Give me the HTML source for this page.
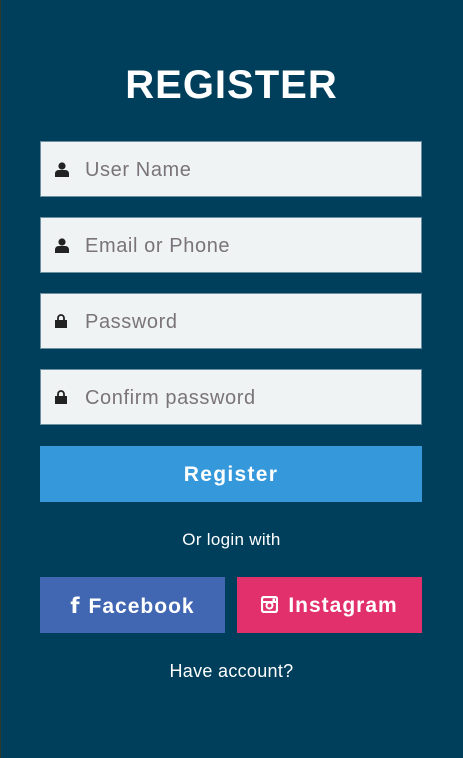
<!DOCTYPE html>
<html><head><style>
body{margin:0;width:463px;height:758px;background:#003f5c;font-family:"Liberation Sans",sans-serif;position:relative;overflow:hidden}
.edge{position:absolute;left:0;top:0;width:1px;height:758px;background:#2a3b2f}
h1{position:absolute;top:63px;left:0;width:463px;text-align:center;margin:0;color:#fff;font-size:40px;font-weight:bold;letter-spacing:1px}
.in{position:absolute;left:40px;width:380px;height:54px;background:#eff3f4;border:1px solid #6d8fa0}
.in span{position:absolute;left:44px;top:17px;font-size:20px;color:#7a7478;letter-spacing:.6px}
.in svg{position:absolute;left:14px;top:20px}
.btn{position:absolute;top:446px;left:40px;width:382px;height:56px;background:#3498db;color:#fff;font-size:21px;font-weight:bold;text-align:center;line-height:58px;letter-spacing:1.3px}
.t{position:absolute;left:0;width:463px;text-align:center;color:#fff;font-size:17px;letter-spacing:.3px}
.s{position:absolute;top:577px;width:185px;height:56px;color:#fff;font-size:21px;font-weight:bold;line-height:58px;text-align:center;letter-spacing:1px}
</style></head><body>
<div class="edge"></div>
<h1>REGISTER</h1>
<div class="in" style="top:141px"><svg width="14" height="15" viewBox="0 0 14 15"><circle cx="7" cy="4" r="3.6" fill="#222"/><path d="M0 15V12Q0 8 4 8H10Q14 8 14 12V15Z" fill="#222"/></svg><span>User Name</span></div>
<div class="in" style="top:217px"><svg width="14" height="15" viewBox="0 0 14 15"><circle cx="7" cy="4" r="3.6" fill="#222"/><path d="M0 15V12Q0 8 4 8H10Q14 8 14 12V15Z" fill="#222"/></svg><span>Email or Phone</span></div>
<div class="in" style="top:293px"><svg width="12" height="14" viewBox="0 0 12 14"><path d="M3 6V4a3 3 0 0 1 6 0V6" stroke="#222" stroke-width="1.8" fill="none"/><rect x="0" y="6" width="12" height="8" fill="#222"/></svg><span>Password</span></div>
<div class="in" style="top:369px"><svg width="12" height="14" viewBox="0 0 12 14"><path d="M3 6V4a3 3 0 0 1 6 0V6" stroke="#222" stroke-width="1.8" fill="none"/><rect x="0" y="6" width="12" height="8" fill="#222"/></svg><span>Confirm password</span></div>
<div class="btn">Register</div>
<div class="t" style="top:530px">Or login with</div>
<div class="s" style="left:40px;background:#4267b2"><span style="font-family:'DejaVu Sans';margin-right:8px">f</span>Facebook</div>
<div class="s" style="left:237px;background:#e1306c"><svg width="17" height="17" viewBox="0 0 17 17" style="vertical-align:-1px;margin-right:10px"><rect x="1" y="1" width="15" height="15" rx="2" fill="none" stroke="#fff" stroke-width="2.2"/><rect x="1" y="5" width="15" height="2" fill="#fff"/><circle cx="8.5" cy="9.5" r="3" fill="none" stroke="#fff" stroke-width="2"/><rect x="11.5" y="2.5" width="2.5" height="2.5" fill="#fff"/></svg>Instagram</div>
<div class="t" style="top:661px;font-size:18px">Have account?</div>
</body></html>
